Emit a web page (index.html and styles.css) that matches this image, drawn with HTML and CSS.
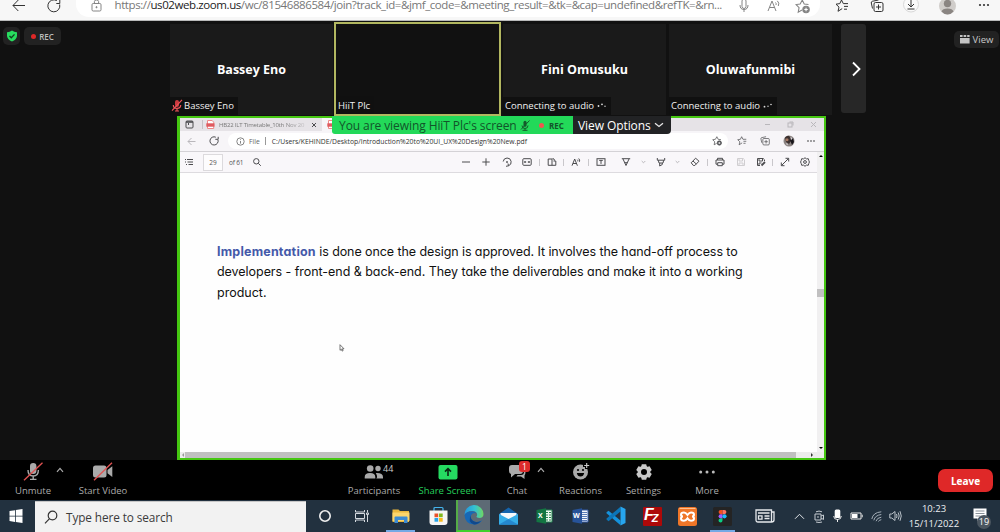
FILE: index.html
```html
<!DOCTYPE html>
<html lang="en">
<head>
<meta charset="utf-8">
<title>Zoom meeting</title>
<link rel="stylesheet" href="styles.css">
</head>
<body>
<svg class="defs" aria-hidden="true">
  <symbol id="refresh" viewBox="0 0 14 14"><path d="M12.7 5.5A6 6 0 1 1 9.8 1.6M9.3 4.5h3.5V1" /></symbol>
  <symbol id="starplus" viewBox="0 0 14 14"><path d="M6.5 10.3 3 12.3l.8-4.2L1 5.2l3.8-.6L6.8 1l1.8 3.6 4 .6"/><circle cx="10.3" cy="9.8" r="3" fill="currentColor"/><path d="M10.3 8.2v3.2M8.7 9.8h3.2" stroke="#fff"/></symbol>
  <symbol id="starlist" viewBox="0 0 14 14"><path d="M7.2 9.6 3 12.3 4 8.1 1 5.2l3.8-.6L6.5 1l1.8 3.6H13M9 7.4h4M9 10.2h3"/></symbol>
  <symbol id="collect" viewBox="0 0 14 14"><rect x="4" y="3.5" width="9" height="9" rx="1.5"/><path d="M8.5 5.5v5M6 8h5M2.5 9.5 1.3 4Q1 2.7 2.2 2.3L8.5 1"/></symbol>
  <symbol id="readaloud" viewBox="0 0 14 14"><path d="M1 12 5 2l4 10M2.5 8.5h5M8.5 3.5Q9.6 4.6 9 6M10.3 1.8Q12.8 4 11.3 7"/></symbol>
  <symbol id="pdf" viewBox="0 0 9 9"><path d="M1.5.5h4.7l1.5 1.7v6.3H1.5z" fill="#fff" stroke="#e88"/><rect x=".3" y="3.3" width="8.2" height="3.4" fill="#df5a5f" stroke="none"/></symbol>
  <symbol id="chev" viewBox="0 0 8 6"><path d="M1 4.8 4 1.4l3 3.4"/></symbol>
</svg>

<header class="browser">
  <svg class="ic" width="14" height="14" viewBox="0 0 14 14"><path d="M13 6.5H1M6.3 1 1 6.5 6.3 12"/></svg>
  <svg class="ic" width="14" height="14"><use href="#refresh"/></svg>
  <div class="address">
    <svg class="ic soft" width="11" height="12" viewBox="0 0 11 12"><rect x="1" y="3.5" width="9" height="7.5" rx="1.2"/><path d="M3.4 3.5V1.5q0-1.5 2.1-1.5t2.1 1.5v2"/><circle cx="5.5" cy="7.2" r=".6" fill="currentColor"/></svg>
    <span class="url">https://<b>us02web.zoom.us</b>/wc/81546886584/join?track_id=&amp;jmf_code=&amp;meeting_result=&amp;tk=&amp;cap=undefined&amp;refTK=&amp;rn...</span>
    <svg class="ic soft" width="10" height="14" viewBox="0 0 10 14"><rect x="3" y="-1" width="4" height="9.5" rx="2"/><path d="M1 5q0 4.5 4 4.5T9 5M5 9.5V12"/></svg>
    <svg class="ic soft up1" width="14" height="14"><use href="#readaloud"/></svg>
    <svg class="ic soft up1" width="15" height="15"><use href="#starplus"/></svg>
  </div>
  <svg class="ic" width="14" height="14"><use href="#starlist"/></svg>
  <svg class="ic" width="14" height="14"><use href="#collect"/></svg>
  <svg class="ic" width="16" height="16" viewBox="0 0 16 16"><circle cx="8" cy="5.5" r="7.5" stroke="#d8d8d8" fill="#fafafa"/><path d="M8 0v7.5M5 5l3 3 3-3M4.5 10h7"/></svg>
  <svg width="17" height="16" viewBox="0 0 17 16"><circle cx="8.5" cy="6" r="8.5" fill="#d0cdca"/><circle cx="8.5" cy="3.5" r="3.7" fill="#8a8582"/><path d="M2.5 11.5Q3.5 8.5 8.5 8.5t6 3Q12 14.5 8.5 14.5t-6-3z" fill="#8a8582"/></svg>
  <svg width="12" height="14" viewBox="0 0 12 14" fill="#333"><circle cx="2" cy="5" r="1.1"/><circle cx="6" cy="5" r="1.1"/><circle cx="10" cy="5" r="1.1"/></svg>
</header>

<main class="meeting">
  <section class="strip">
    <div class="badges">
      <span class="badge shield"><svg width="12" height="12" viewBox="0 0 12 12"><path d="M6 .5Q8.5 2.3 11 2.2V6Q10.5 9.5 6 11.5 1.5 9.5 1 6V2.2Q3.5 2.3 6 .5z" fill="#27dc5f"/><path d="m3.5 6 1.8 1.8 3.2-3.4" fill="none" stroke="#153c20" stroke-width="1.3"/></svg></span>
      <span class="badge rec"><i></i>REC</span>
    </div>
    <article class="tile"><h2>Bassey Eno</h2><p class="muted"><svg width="12" height="13" viewBox="0 0 12 13"><rect x="4" y="1" width="4" height="7" rx="2" fill="#c9393e"/><path d="M2.3 6q0 3.4 3.7 3.4T9.7 6M6 9.5V12M4 12h4M1 11.7 11 .8" stroke="#ee5359" fill="none" stroke-width="1.2"/></svg>Bassey Eno</p></article>
    <article class="tile active"><p>HiiT Plc</p></article>
    <article class="tile third"><h2>Fini Omusuku</h2><p>Connecting to audio <svg width="10" height="6" viewBox="0 0 10 6" fill="#ddd"><circle cx="1.5" cy="4" r=".9"/><circle cx="5" cy="2.3" r=".9"/><circle cx="8" cy="4.3" r=".7"/></svg></p></article>
    <article class="tile fourth"><h2>Oluwafunmibi</h2><p>Connecting to audio <svg width="10" height="6" viewBox="0 0 10 6" fill="#ddd"><circle cx="1.5" cy="4.7" r=".9"/><circle cx="5" cy="4.2" r=".7"/><circle cx="8" cy="2.5" r=".8"/></svg></p></article>
    <button class="next"><svg width="11" height="16" viewBox="0 0 11 16"><path d="m2 1.5 6.5 6.5L2 14.5" fill="none" stroke="#fff" stroke-width="1.8"/></svg></button>
    <span class="badge view"><svg width="10" height="9" viewBox="0 0 10 9" fill="#c4c4c4"><path d="M0 0h2.6v2H0zM3.6 0h2.6v2H3.6zM7.2 0h2.4v2H7.2zM0 3h9.6v5.5H0z"/></svg>View</span>
  </section>

  <section class="share">
    <div class="banner"><div class="notice"><span>You are viewing HiiT Plc's screen</span><svg width="10" height="11" viewBox="0 0 10 11"><path d="M2 5.5q0 3 3 3t3-3M5 8.5v2M2.5 10.3h5M1 9.5 9.5.5" stroke="#145a2b" fill="none"/><rect x="3.5" y=".8" width="3" height="6" rx="1.5" fill="#145a2b"/></svg><i></i><b>REC</b></div><div class="options"><span>View Options</span><svg width="10" height="6" viewBox="0 0 10 6"><path d="m1 1.2 4 3.2 4-3.2" fill="none" stroke="#e8e8e8" stroke-width="1.3"/></svg></div></div>
    <div class="tabs">
      <svg class="ic" width="9" height="9" viewBox="0 0 9 9"><rect x="1" y="1" width="7" height="7" rx="1"/><path d="M1 2h7" stroke-width="1.6"/><path d="M3.5 3v2"/></svg>
      <i class="sep"></i>
      <svg class="ic" width="9" height="9"><use href="#pdf"/></svg>
      <span class="tabname">HB22 ILT Timetable_10th Nov 20</span>
      <svg class="ic" width="6" height="6" viewBox="0 0 6 6"><path d="m1 1 4 4M5 1 1 5"/></svg>
      <div class="current"><svg class="ic" width="9" height="9"><use href="#pdf"/></svg></div>
      <svg class="ic faint" width="7" height="7" viewBox="0 0 7 7"><path d="M1 3.5h5"/></svg>
      <svg class="ic faint" width="7" height="7" viewBox="0 0 7 7"><rect x="1" y="2" width="4" height="4"/><path d="M2.5 1H6v3.5"/></svg>
      <svg class="ic faint" width="7" height="7" viewBox="0 0 7 7"><path d="m1 1 5 5M6 1 1 6"/></svg>
    </div>
    <div class="location">
      <svg class="ic faint" width="9" height="9" viewBox="0 0 9 9"><path d="M8.5 4.5H1M4.5 1 1 4.5 4.5 8"/></svg>
      <svg class="ic" width="10" height="10" viewBox="0 0 10 10"><path d="M9 3.8A4.1 4.1 0 1 1 6.8 1.2M6.3 3.3h2.9V.8"/></svg>
      <div class="path">
        <svg class="ic soft" width="9" height="9" viewBox="0 0 9 9"><circle cx="4.5" cy="4.5" r="3.7"/><path d="M4.5 4v2.6M4.5 2.3v.8"/></svg>
        <span class="file">File</span><i></i><span class="name">C:/Users/KEHINDE/Desktop/Introduction%20to%20UI_UX%20Design%20New.pdf</span>
        <svg class="ic" width="10" height="10"><use href="#starplus"/></svg>
      </div>
      <svg class="ic" width="10" height="10"><use href="#starlist"/></svg>
      <svg class="ic" width="10" height="10"><use href="#collect"/></svg>
      <svg width="12" height="12" viewBox="0 0 12 12"><circle cx="6" cy="6" r="5.5" fill="#8a8280"/><path d="M2 2.5Q5-.5 7 2l1 4-2 3-3-2z" fill="#3b302f"/><circle cx="4" cy="4.8" r="1.5" fill="#a57864"/><path d="m7 5 2 5 2-3-1-4z" fill="#171519"/><path d="m7.5 2 2 1.2-1 2zM3 8l2 1-1 1.500z" fill="#dcd8dc"/></svg>
      <svg width="8" height="4" viewBox="0 0 8 4" fill="#333"><circle cx="1" cy="2" r=".8"/><circle cx="4" cy="2" r=".8"/><circle cx="7" cy="2" r=".8"/></svg>
    </div>
    <div class="viewer">
      <div class="pane">
        <div class="tools">
          <svg class="ic" width="10" height="10" viewBox="0 0 10 10"><path d="M3 2.500h6M3.500 5H9M4.500 7.500H9M1 2.500h1M1 5h1M2 7.500h1"/></svg>
          <span class="page">29</span>
          <span class="count">of 61</span>
          <svg class="ic" width="10" height="10" viewBox="0 0 10 10"><circle cx="4.300" cy="4.300" r="2.700"/><path d="m6.300 6.300 2.500 2.500"/></svg>
          <svg class="ic" width="10" height="10" viewBox="0 0 10 10"><path d="M1 5h8"/></svg>
          <svg class="ic" width="10" height="10" viewBox="0 0 10 10"><path d="M1.300 5h7.400M5 1.300v7.400"/></svg>
          <svg class="ic" width="10" height="10" viewBox="0 0 10 10"><path d="M1.200 4.500A4 4 0 1 1 6.500 8.800M4 9.300l2.500-.5L6 6.500"/><circle cx="5" cy="5" r=".5" fill="currentColor"/></svg>
          <svg class="ic" width="10" height="10" viewBox="0 0 10 10"><rect x=".8" y="1.700" width="8.400" height="6.600" rx="1"/><path d="M2.200 5h2M5.800 5h2M3 4v2M7 4v2"/></svg>
          <i></i>
          <svg class="ic" width="10" height="10" viewBox="0 0 10 10"><path d="M5 8.300H1.200V2H5zM6.500 4h2.300v4.300H5M5.500 1.500q2 0 2 2"/></svg>
          <i></i>
          <svg class="ic" width="10" height="10" viewBox="0 0 10 10"><path d="M1 8.700 3.700 2l2.700 6.700M2 6.500h3.500M6.300 2.700q.8.700.4 1.600M7.700 1.500q1.500 1.500.7 3.300"/></svg>
          <i></i>
          <svg class="ic" width="10" height="10" viewBox="0 0 10 10"><rect x="1" y="1.700" width="8" height="6.600"/><path d="M3.200 3.400h3.600M5 3.400v3.500"/></svg>
          <svg class="ic" width="10" height="10" viewBox="0 0 10 10"><path d="M.8 1.700h8.400M2 2l3 6.500L8 2M3.700 5.700h2.600"/></svg>
          <svg class="ic faint" width="5" height="4" viewBox="0 0 5 4"><path d="m.7 1 1.800 1.800L4.300 1"/></svg>
          <svg class="ic" width="10" height="10" viewBox="0 0 10 10"><path d="M1.300 1v2.200h7.400V1M2.300 3.200 3 6h4l.7-2.800M3.700 6v3L6.300 7.500V6"/></svg>
          <svg class="ic faint" width="5" height="4" viewBox="0 0 5 4"><path d="m.7 1 1.800 1.800L4.300 1"/></svg>
          <svg class="ic" width="10" height="10" viewBox="0 0 10 10"><path d="M1.200 5.800 5.600 1.200 9 4.200 4.800 8.500H3.400zM3 4l3.300 3"/></svg>
          <i></i>
          <svg class="ic" width="10" height="10" viewBox="0 0 10 10"><path d="M2.500 3V1.300h5V3M2.500 7.200H1V3h8v4.200H7.500M2.700 5.700h4.600v3H2.700z"/></svg>
          <svg class="ic pale" width="10" height="10" viewBox="0 0 10 10"><path d="M1.500 1.500h5.700l1.300 1.300v5.700h-7zM3 1.500V4h3.500V1.500M3 8.300V6h4v2.300"/></svg>
          <svg class="ic" width="10" height="10" viewBox="0 0 10 10"><path d="M4 8.500H1.500v-7h5.700l1.300 1.300V4M3 1.500V4h3.500V1.500M3 8.300V6h2.500"/><path d="M5.500 8.500 9 5" stroke-width="1.800"/></svg>
          <i></i>
          <svg class="ic" width="10" height="10" viewBox="0 0 10 10"><path d="m1.500 8.500 7-7M5.500 1.300h3.200v3.200M1.300 5.500v3.200h3.200"/></svg>
          <svg class="ic" width="10" height="10" viewBox="0 0 10 10"><path d="m5 .7 1.400 1.200 1.900-.2.500 1.800.6 1.500-.6 1.500-.5 1.800-1.900-.2L5 9.300 3.600 8.100l-1.900.2-.5-1.800L.6 5l.6-1.500.5-1.800 1.900.2z"/><circle cx="5" cy="5" r="1.400"/></svg>
        </div>
        <div class="sheet">
          <p><strong>Implementation</strong><span class="l1"> is done once the design is approved. It involves the hand-off process to</span><br><span class="l2">developers - front-end &amp; back-end. They take the deliverables and make it into a working</span><br>product.</p>
          <svg class="cursor" width="6" height="8" viewBox="0 0 6 8"><path d="M1 .7v5.600l1.300-1.100.8 1.900 1-.5-.8-1.800H5z" fill="#fff" stroke="#555" stroke-width=".8"/></svg>
        </div>
      </div>
      <div class="vscroll"><svg width="4" height="2" viewBox="0 0 4 2"><path d="M0 2 2 0 4 2z"/></svg><span></span><svg width="4" height="2" viewBox="0 0 4 2"><path d="M0 0 2 2 4 0z"/></svg></div>
    </div>
    <div class="hscroll"><svg width="2" height="4" viewBox="0 0 2 4"><path d="M2 0 0 2 2 4z" fill="#999"/></svg><span></span><svg width="2" height="4" viewBox="0 0 2 4"><path d="M0 0 2 2 0 4z" fill="#333"/></svg></div>
  </section>
</main>

<nav class="controls">
  <div class="control"><svg width="20" height="20" viewBox="0 0 20 20"><rect x="7" y="1" width="6.400" height="11" rx="3.200" fill="#aaa"/><path d="M5 8q0 6 5.200 6t5.200-6M10.200 14v3.300M7 17.400h6.500" fill="none" stroke="#aaa" stroke-width="1.400"/><path d="M1 18.300 19.500.7" stroke="#e05252" stroke-width="1.300"/></svg><span>Unmute</span><svg class="caret" width="8" height="6"><use href="#chev"/></svg></div>
  <div class="control video"><svg width="20" height="20" viewBox="0 0 20 20"><rect x="0" y="3.500" width="13.500" height="12" rx="2.500" fill="#aaa"/><path d="m14.500 8 4.800-3.800v10.700l-4.800-3.600z" fill="#aaa"/><path d="M1 18.300 19 .7" stroke="#e05252" stroke-width="1.300"/></svg><span>Start Video</span></div>
  <div class="control people"><svg width="20" height="20" viewBox="0 0 20 20" fill="#aaa"><circle cx="6.200" cy="6.500" r="3.300"/><circle cx="14" cy="6.500" r="2.700"/><path d="M.7 16.500v-1.300Q.7 11 6 11t5.300 4.200v1.300zM12.300 16.500H19v-1.300Q19 11 12.800 11q-.8 0-1 .2 1.300 1.500 1.300 4z"/></svg><span>Participants</span><em>44</em></div>
  <div class="control sharing"><svg width="20" height="20" viewBox="0 0 20 20"><rect x=".5" y="3" width="19" height="14.500" rx="2" fill="#25da61"/><path d="M10 14V7M7 9.600l3-3 3 3" fill="none" stroke="#0a2512" stroke-width="1.600"/></svg><span>Share Screen</span></div>
  <div class="control chat"><svg width="20" height="20" viewBox="0 0 20 20" fill="#aaa"><path d="M5 3h8q3 0 3 3v3q0 3-3 3H8l-4 3.500V12Q2 11.500 2 9V6q0-3 3-3z"/><path d="M17 7q1.500.500 1.500 3t-1 3.500V17L14 14.500H9.500l1-1.400H14q3 0 3-3z"/></svg><span>Chat</span><mark>1</mark><svg class="caret" width="8" height="6"><use href="#chev"/></svg></div>
  <div class="control"><svg width="20" height="20" viewBox="0 0 20 20"><circle cx="9.500" cy="10" r="7.500" fill="#aaa"/><path d="M15.500 0v7M12 3.500h7" stroke="#000" stroke-width="3"/><path d="M15.700 1v5M13.200 3.500h5" stroke="#ccc" stroke-width="1.100"/><circle cx="7" cy="8" r="1.100"/><circle cx="12" cy="8" r="1.100"/><path d="M5.800 11h7.400q-.7 3.500-3.700 3.500t-3.700-3.500z"/></svg><span>Reactions</span></div>
  <div class="control"><svg width="20" height="20" viewBox="0 0 20 20"><g fill="#c9c9c9"><circle cx="10" cy="10" r="6.200"/><path id="tooth" d="M7.800 2.300h4.400l.8 3H7zM7.800 17.700h4.400l.8-3H7z"/><use href="#tooth" transform="rotate(60 10 10)"/><use href="#tooth" transform="rotate(120 10 10)"/></g><circle cx="10" cy="10" r="3"/></svg><span>Settings</span></div>
  <div class="control"><svg width="20" height="20" viewBox="0 0 20 20" fill="#bbb"><circle cx="3.700" cy="10" r="1.500"/><circle cx="10" cy="10" r="1.500"/><circle cx="16.300" cy="10" r="1.500"/></svg><span>More</span></div>
  <button class="leave">Leave</button>
</nav>

<footer class="taskbar">
  <div class="start"><svg width="14" height="14" viewBox="0 0 14 14" fill="#fff"><path d="m.5 2 5.500-.8v5.500H.5zM6.800 1 13.500 0v6.700H6.800zM.5 7.500H6v5.400l-5.500-.8zM6.800 7.500h6.700v6.400l-6.700-1z"/></svg></div>
  <div class="search"><svg width="14" height="15" viewBox="0 0 14 15"><circle cx="8.500" cy="5.500" r="4.300" fill="none" stroke="#333" stroke-width="1.200"/><path d="M5.500 8.700 1 13.400" stroke="#333" stroke-width="1.200"/></svg><span>Type here to search</span></div>
  <div class="app"><svg width="14" height="14" viewBox="0 0 14 14"><circle cx="7" cy="7" r="5.200" fill="none" stroke="#f0f0f0" stroke-width="1.600"/></svg></div>
  <div class="app"><svg width="14" height="14" viewBox="0 0 14 14" fill="none" stroke="#d4d9df"><path d="M.5 1v2h9V1M.5 4.500h9v5h-9zM.5 13v-2h9v2M12.500 1v2.500M12.500 6v7M11.500 4h2v1.500h-2z"/></svg></div>
  <div class="app running"><svg width="18" height="16" viewBox="0 0 18 16"><path d="M.5 1.500h6L8 3h9v11H.5z" fill="#eab83f"/><path d="M.5 4.500h17V13H.5z" fill="#fbd56c"/><path d="M2.500 15V9.500q0-1 1-1h11q1 0 1 1V15h-3.500v-3H6v3z" fill="#3c8bd3"/></svg></div>
  <div class="app"><svg width="19" height="19" viewBox="0 0 19 19"><path d="M5 4V1.500q0-1 1-1h7q1 0 1 1V4" fill="none" stroke="#45b4ed" stroke-width="1.200"/><path d="M.5 3.500h18V15q0 3-3 3h-12q-3 0-3-3z" fill="#f5f5f5"/><path d="M5.500 6.500h3.700v3.700H5.500z" fill="#e9512a"/><path d="M10 6.500h3.700v3.700H10z" fill="#80b91e"/><path d="M5.500 11h3.700v3.700H5.500z" fill="#28a4e8"/><path d="M10 11h3.700v3.700H10z" fill="#f8b91c"/></svg></div>
  <div class="app edge"><svg width="20" height="20" viewBox="0 0 20 20"><defs><linearGradient id="eg"><stop offset="0" stop-color="#2595df"/><stop offset=".55" stop-color="#35c3d1"/><stop offset="1" stop-color="#70d760"/></linearGradient></defs><path d="M.5 10A9.500 9.500 0 0 1 19.500 9q0 4-4.200 4-3.300 0-2.800-1.500 1-1 .5-2.700Q12 6 8.500 6 3 6 .5 10z" fill="url(#eg)"/><path d="M.5 10Q2.500 6.300 8 6.300q3 0 4.300 2.200Q8.500 6.800 7 10.500q-1 4.500 4 6.300 4 1 7.300-1.800Q15 19.700 10 19.500 1 19 .5 10z" fill="#1768b5"/><path d="M7 10.500q-1 4.500 4 6.300 3 .8 6-.8-3 3.700-7 3.400Q3 17 7 10.500z" fill="#10498c"/></svg></div>
  <div class="app"><svg width="19" height="18" viewBox="0 0 19 18"><path d="m0 7 9.500-6.500L19 7v10.500H0z" fill="#1565ad"/><path d="M1.500 6h16v7h-16z" fill="#f5f9fb"/><path d="m0 7 9.500 5L19 7v10.500H0z" fill="#36aee8"/><path d="m0 17.500 9.500-5.500L19 17.500z" fill="#2588cf"/></svg></div>
  <div class="app"><svg width="17" height="16" viewBox="0 0 17 16"><path d="M8 2h8v12H8z" fill="#eef7ef" stroke="#278754"/><path d="M10 4.500h2M13 4.500h2M10 7h2M13 7h2M10 9.500h2M13 9.500h2M10 12h2M13 12h2" stroke="#25844f"/><path d="m.5 2 9.500-1.800v15.600L.5 14z" fill="#137542"/></svg><b>X</b></div>
  <div class="app"><svg width="17" height="16" viewBox="0 0 17 16"><path d="M8 2h8v12H8z" fill="#f4f7fb" stroke="#325ba5"/><path d="M10 4.500h5M10 6.500h5M10 8.500h5M10 10.500h5M10 12.500h5" stroke="#325ba5" stroke-width=".8"/><path d="m.5 2 9.500-1.800v15.600L.5 14z" fill="#275399"/></svg><b>W</b></div>
  <div class="app"><svg width="20" height="20" viewBox="0 0 20 20"><path d="m.5 6.300 2-1.600 12 9.800v4.700L.5 7.300z" fill="#1592dc"/><path d="m.5 13.500 2 1.800 12-9.800V.8L.5 12.500z" fill="#0c75b7"/><path d="M14.500.5 19.500 3v14l-5 2.500z" fill="#27a5ee"/></svg></div>
  <div class="app fz"><b>F<small>Z</small></b></div>
  <div class="app xp"><svg width="19" height="19" viewBox="0 0 19 19"><rect width="19" height="19" rx="2.500" fill="#ef7628"/><path d="M1.500 1.500h16" stroke="#ffc08e"/><path d="M6 5.500q-3 0-3 2.200 0 1.800 2 1.800-2 0-2 2 0 2.300 3 2.300 1.700 0 3.500-2.500 1.800 2.500 3.500 2.500 3 0 3-2.300 0-2-2-2 2 0 2-1.800 0-2.200-3-2.200-1.700 0-3.500 2.400Q7.700 5.500 6 5.500z" fill="none" stroke="#fff" stroke-width="2"/></svg></div>
  <div class="app running"><svg width="19" height="19" viewBox="0 0 19 19"><rect width="19" height="19" rx="1.500" fill="#242424"/><path d="M9.500 3H7.700a2 2 0 0 0 0 4.200h1.800z" fill="#f24e1e"/><path d="M9.500 3h1.800a2 2 0 0 1 0 4.200H9.500z" fill="#ff7262"/><path d="M9.500 7.200H7.700a2 2 0 0 0 0 4.200h1.800z" fill="#a259ff"/><circle cx="11.500" cy="9.300" r="2.100" fill="#1abcfe"/><path d="M9.500 11.400H7.700a2 2 0 1 0 1.800 2z" fill="#0acf83"/></svg></div>
  <div class="app news"><svg width="20" height="14" viewBox="0 0 20 14" fill="none" stroke="#e6e9ec" stroke-width="1.300"><path d="M1 1h15.500v12H3q-2 0-2-2zM16.500 3H19v8q0 2-2.500 2M3 4h11.500M9.500 7h5M9.500 9.500h5M3.500 6.800H7v3.400H3.500z"/></svg></div>
  <div class="app up"><svg width="11" height="7" viewBox="0 0 11 7"><path d="m1 5.800 4.500-4.500L10 5.800" fill="none" stroke="#e0e4e8"/></svg></div>
  <div class="app meet"><svg width="11" height="13" viewBox="0 0 11 13" fill="none" stroke="#c4cad0"><path d="M1 4h6v6H1zM7 6l2.500-1v4.500L7 8M2 1.800Q5 .3 8 1.800M2 12q3 1 6 0M4 6v2"/></svg></div>
  <div class="app tmic"><svg width="9" height="14" viewBox="0 0 9 14"><rect x="1.700" y=".5" width="5.600" height="8.500" rx="1.500" fill="#fff"/><path d="M.7 7q0 3.500 3.800 3.500T8.300 7M4.500 10v3" fill="none" stroke="#eee"/></svg></div>
  <div class="app batt"><svg width="13" height="8" viewBox="0 0 13 8"><path d="M1 1h10v6H1zM12.200 2.700v2.600" fill="none" stroke="#e8e8e8"/><path d="M2 2h5.500v4H2z" fill="#fff"/></svg></div>
  <div class="app wifi"><svg width="11" height="11" viewBox="0 0 11 11" fill="none" stroke="#a5afb9"><path d="M.8 8Q2 1.500 10.300.8M2.800 9.300Q4 4.300 10.300 3.500M5 10.200q1-3.500 5.300-4M7.500 10.500Q8 9 10.300 8.700"/></svg></div>
  <div class="app snd"><svg width="13" height="12" viewBox="0 0 13 12" fill="none" stroke="#bbc3ca"><path d="M.8 4v4h2L6 10.500v-9L2.800 4zM7.500 4q1 2 0 4M9.200 2.500q2 3.500 0 7M11 1.200q2.500 4.800 0 9.600" /></svg></div>
  <time class="clock"><span>10:23</span><span>15/11/2022</span></time>
  <div class="notes"><svg width="14" height="14" viewBox="0 0 14 14"><path d="M.5.500h13v10H8L4.500 13.500v-3h-4z" fill="#fff"/><path d="M2.500 3h9M2.500 5.500h9M2.500 8h5" stroke="#6c7680" stroke-width=".8"/></svg><mark>19</mark></div>
</footer>
</body>
</html>
```
FILE: styles.css
```css
* { box-sizing: border-box; }
body { margin: 0; width: 1000px; height: 532px; overflow: hidden; display: flex; flex-direction: column; background: #111; font-family: "Open Sans", "Noto Sans", sans-serif; }
h2, p { margin: 0; }
button { border: 0; padding: 0; font-family: inherit; }
svg { display: block; flex: none; overflow: visible; }
.defs { position: absolute; width: 0; height: 0; }
.ic { fill: none; stroke: currentColor; stroke-width: 1; color: #4c4c4f; }
.soft { color: #858585; }
.faint { color: #b9b7bb; }
.pale { color: #d0ced1; }

/* Outer browser toolbar */
.browser { height: 21px; flex: none; padding-left: 12px; display: grid; grid-template-columns: 35px 29px 759px 35px 33px 36px 39px auto; background: #f7f7f7; border-bottom: 1px solid #b9baba; }
.browser > .ic { color: #333; margin-top: -1px; }
.address { width: 744px; height: 17px; padding-left: 15px; display: grid; grid-template-columns: 23.5px 624.5px 28px 28px auto; background: #fff; border-radius: 0 0 13px 13px; }
.up1 { margin-top: -1px; }
.url { height: 14px; line-height: 10px; font-size: 11.5px; color: #777; white-space: nowrap; letter-spacing: -0.41px; }
.url b { font-weight: 400; color: #1c1c1c; }

/* Video strip */
.meeting { height: 439px; flex: none; }
.strip { height: 95px; display: flex; align-items: flex-start; padding-top: 1px; }
.badges { width: 170px; display: flex; gap: 4px; padding: 5px 0 0 3px; }
.badge { display: flex; align-items: center; justify-content: center; height: 18px; border-radius: 5px; background: #222; color: #c8c8c8; }
.shield { width: 17px; }
.rec { width: 37px; gap: 3px; font: 600 8px "Open Sans", sans-serif; color: #bcbcbc; }
.rec i { width: 5px; height: 5px; border-radius: 50%; background: #de2828; }
.tile { position: relative; width: 163px; height: 91px; margin-top: 2px; display: flex; align-items: center; justify-content: center; background: #1a1a1a; }
.tile h2 { font-size: 12.5px; line-height: 18px; color: #fff; white-space: nowrap; }
.tile p { position: absolute; left: 0; bottom: 0; height: 18px; padding: 0 4px 2px 2px; display: flex; align-items: center; gap: 3px; background: #101010; color: #f0f0f0; font-size: 9.5px; white-space: nowrap; }
.tile p.muted { padding-left: 1px; gap: 1px; }
.tile.active { width: 167px; height: 94px; margin: 0 0 0 1px; background: #111; border: 2px solid #b2b760; }
.tile.active p { left: 0; padding-bottom: 0; }
.tile.third { margin-left: 2px; width: 163px; }
.tile.fourth { margin-left: 3px; width: 163px; }
.next { width: 25px; height: 89px; margin: 2px 0 0 9px; padding-left: 5px; display: flex; align-items: center; justify-content: center; background: #272727; border-radius: 3px; }
.view { width: 45px; margin: 9px 0 0 88px; gap: 3px; font-size: 9.5px; height: 17px; }

/* Shared screen */
.share { position: relative; width: 649px; height: 344px; margin-left: 177px; border: 2px solid #45c711; border-width: 2px 2px 2px 3px; background: #fff; display: flex; flex-direction: column; }
.banner { position: absolute; left: 152px; top: -2px; height: 18px; display: flex; }
.notice { width: 241px; padding-left: 7px; display: flex; align-items: center; background: #23d959; border-radius: 0 0 0 3px; color: #12542a; font-size: 12px; white-space: nowrap; }
.notice span { width: 181px; letter-spacing: -0.08px; }
.notice i { width: 5px; height: 5px; margin: 0 5px 0 9px; border-radius: 50%; background: #f0564f; }
.notice b { font-size: 8px; }
.options { width: 98px; padding-left: 5px; display: flex; align-items: center; gap: 3px; background: #222325; border-radius: 0 0 4px 0; color: #fff; font-size: 12px; letter-spacing: -0.08px; white-space: nowrap; }
.tabs { height: 13px; padding-left: 5px; display: grid; grid-template-columns: 17px 4px 13px 92px 11px 442px 23px 23px auto; align-items: center; background: #e6e3e7; }
.sep { width: 1px; height: 9px; background: #c5c2c6; }
.tabname { width: 89px; white-space: nowrap; font-size: 6px; letter-spacing: -0.18px; line-height: 10px; color: #777; -webkit-mask-image: linear-gradient(90deg, #000 70%, rgba(0,0,0,.2)); mask-image: linear-gradient(90deg, #000 70%, rgba(0,0,0,.2)); }
.current { width: 200px; height: 13px; padding: 2px 5px; background: #f7f5f8; }
.location { height: 21px; padding-left: 7px; display: grid; grid-template-columns: 22px 19px 509px 23px 23px 24px auto; align-items: center; background: #f7f5f8; border-bottom: 1px solid #d4d2d6; }
.path { width: 500px; height: 16px; padding: 0 6px 0 8px; display: flex; align-items: center; background: #fff; border-radius: 8px; white-space: nowrap; font-size: 6.8px; color: #666; }
.path .file { margin-left: 4px; }
.path i { width: 1px; height: 8px; margin: 0 6px 0 5px; background: #999; }
.path .name { flex: 1; color: #333; }
.viewer { flex: 1; display: flex; }
.pane { flex: 1; display: flex; flex-direction: column; }
.tools { height: 21px; padding-left: 4px; display: grid; grid-template-columns: 19px 26px 22.5px 209.5px 20px 20.5px 20.5px 17px 7.5px 16.5px 8px 17px 8px 24.5px 20px 15px 19px 15px 17px 8px 21px 20px 16px 8px 20px auto; align-items: center; background: #f9f7fa; border-bottom: 1px solid #dddbdf; font-size: 6.5px; color: #555; }
.tools i { width: 1px; height: 7px; background: #c9c7cb; }
.page { width: 20px; height: 17px; line-height: 16px; text-align: center; border: 1px solid #dcdadd; background: #fdfcfd; }
.count { white-space: nowrap; letter-spacing: -0.2px; }
.sheet { position: relative; flex: 1; padding: 69px 0 0 37px; background: #fefefe; }
.sheet p { font: 400 12.5px/20.3px Inter, "Open Sans", sans-serif; font-feature-settings: "cv11" 1; color: #111; white-space: nowrap; }
.sheet strong { color: #4459a9; font-weight: 700; letter-spacing: 0.2px; }
.l1 { letter-spacing: -0.085px; }
.l2 { letter-spacing: -0.045px; }
.cursor { position: absolute; left: 159px; top: 171px; }
.vscroll { width: 7px; background: #f1f0f1; padding: 3px 0; display: flex; flex-direction: column; align-items: center; justify-content: space-between; }
.vscroll span { width: 7px; height: 8px; margin-top: -18px; background: #c1c0c1; }
.hscroll { height: 6px; padding: 0 11px 0 2px; display: flex; align-items: center; gap: 1px; background: #ececec; }
.hscroll span { width: 611px; height: 6px; margin-right: auto; background: #c0c0c0; }

/* Meeting controls */
.controls { height: 40px; flex: none; background: #000; display: grid; grid-template-columns: 66px 273px 70px 77px 62px 65px 61px 66px auto; }
.control { position: relative; width: 100%; padding-top: 2px; display: flex; flex-direction: column; align-items: center; color: #aaa; font-size: 9.5px; white-space: nowrap; }
.control span { line-height: 14px; margin-top: 2px; }
.control.video { width: 74px; }
.control.sharing { color: #25ce5b; }
.control em { position: absolute; left: 44px; top: 3px; font-style: normal; font-size: 9px; line-height: 12px; color: #ccc; }
.control mark { position: absolute; left: 33px; top: 1px; width: 11px; height: 11px; border-radius: 3px; background: #dd2b2b; color: #fff; font-size: 8.5px; line-height: 11px; text-align: center; }
.caret { position: absolute; left: 56px; top: 7px; fill: none; stroke: #aaa; stroke-width: 1.2; }
.chat .caret { left: 51px; }
.leave { width: 55px; height: 23px; margin: 9px 0 0 198px; background: #df2828; color: #fff; border-radius: 7px; font-size: 10px; font-weight: 700; }

/* Taskbar */
.taskbar { height: 32px; flex: none; display: grid; grid-template-columns: 35px 271px 37px 38px 39px 36px 34px 37px 35px 36px 36px 36px 35px 35px 50px 19px 20px 17px 21px 18px 20px 58px 37px; background: #22313f; }
.start, .app { position: relative; display: flex; align-items: center; justify-content: center; }
.start { padding-right: 4px; }
.search { margin-top: 1px; padding-left: 9px; display: flex; align-items: center; gap: 8px; background: #f2f2f2; color: #3b3b3b; font-size: 11.8px; border-top: 1px solid #c7c7c7; white-space: nowrap; letter-spacing: -0.1px; }
.app b { position: absolute; left: 11px; top: 10px; font-size: 7px; line-height: 11px; color: #fff; }
.running::after { content: ""; position: absolute; left: 5px; right: 5px; bottom: 0; height: 2px; background: #75a9e5; }
.edge { background: #5d6a75; border-left: 2px solid #55ad48; border-bottom: 2px solid #3fd02c; }
.fz::before { content: ""; width: 19px; height: 19px; background: #ad0909; border-radius: 1px; }
.fz b { left: 10px; top: 6px; font: italic 700 16px/18px "Liberation Sans", sans-serif; letter-spacing: -2px; }
.fz small { font-size: 11px; position: relative; top: 2px; }
.clock { display: flex; flex-direction: column; align-items: center; font-size: 9.5px; line-height: 15px; padding-top: 1px; color: #eef0f2; }
.notes { position: relative; padding: 8px 0 0 10px; }
.notes mark { position: absolute; left: 14px; top: 15px; width: 14px; height: 14px; border-radius: 50%; background: #4b5660; color: #fff; font-size: 9px; line-height: 14px; text-align: center; }
```
